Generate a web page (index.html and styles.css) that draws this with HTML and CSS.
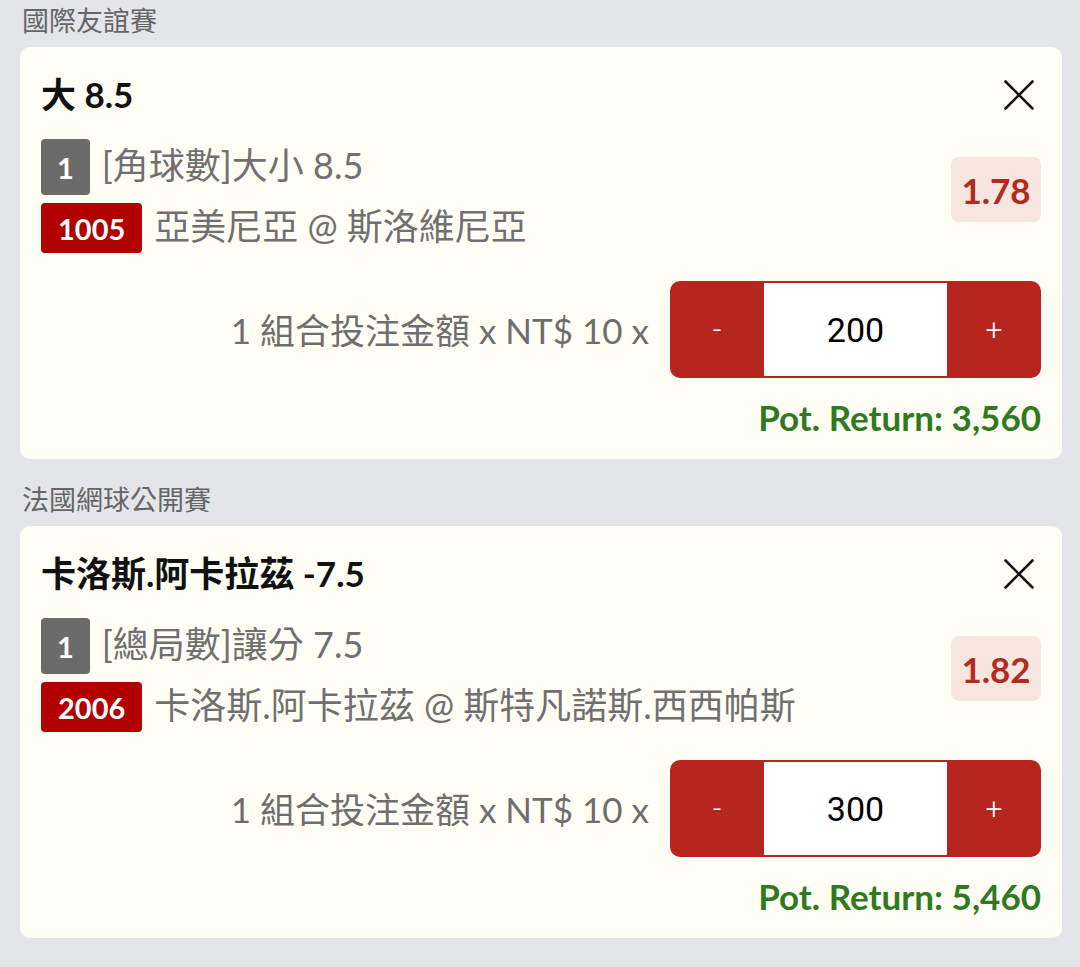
FILE: index.html
```html
<!DOCTYPE html>
<html lang="zh-Hant">
<head>
<meta charset="utf-8">
<title>Bet slip</title>
<link rel="stylesheet" href="styles.css">
</head>
<body>
<div class="slip">
  <section class="group">
    <div class="group-title">國際友誼賽</div>
    <div class="card">
      <div class="card-head">
        <div class="pick">大 8.5</div>
        <button class="close" aria-label="close">
          <svg viewBox="0 0 30 30" width="30" height="30"><path d="M1.5 1.5 L28.5 28.5 M28.5 1.5 L1.5 28.5" stroke="#111" stroke-width="2.6" stroke-linecap="round" fill="none"/></svg>
        </button>
      </div>
      <div class="sel">
        <div class="sel-info">
          <div class="sel-row row-a"><span class="badge badge-gray">1</span><span class="sel-text">[角球數]大小 8.5</span></div>
          <div class="sel-row row-b"><span class="badge badge-red">1005</span><span class="sel-text">亞美尼亞 @ 斯洛維尼亞</span></div>
        </div>
        <div class="odds">1.78</div>
      </div>
      <div class="stake">
        <span class="stake-label">1 組合投注金額 x NT$ 10 x</span>
        <div class="stepper">
          <button class="step">-</button>
          <input class="amount" type="text" value="200">
          <button class="step">+</button>
        </div>
      </div>
      <div class="pot">Pot. Return: 3,560</div>
    </div>
  </section>
  <section class="group">
    <div class="group-title">法國網球公開賽</div>
    <div class="card">
      <div class="card-head">
        <div class="pick">卡洛斯.阿卡拉茲 -7.5</div>
        <button class="close" aria-label="close">
          <svg viewBox="0 0 30 30" width="30" height="30"><path d="M1.5 1.5 L28.5 28.5 M28.5 1.5 L1.5 28.5" stroke="#111" stroke-width="2.6" stroke-linecap="round" fill="none"/></svg>
        </button>
      </div>
      <div class="sel">
        <div class="sel-info">
          <div class="sel-row row-a"><span class="badge badge-gray">1</span><span class="sel-text">[總局數]讓分 7.5</span></div>
          <div class="sel-row row-b"><span class="badge badge-red">2006</span><span class="sel-text">卡洛斯.阿卡拉茲 @ 斯特凡諾斯.西西帕斯</span></div>
        </div>
        <div class="odds">1.82</div>
      </div>
      <div class="stake">
        <span class="stake-label">1 組合投注金額 x NT$ 10 x</span>
        <div class="stepper">
          <button class="step">-</button>
          <input class="amount" type="text" value="300">
          <button class="step">+</button>
        </div>
      </div>
      <div class="pot">Pot. Return: 5,460</div>
    </div>
  </section>
</div>
</body>
</html>
```
FILE: styles.css
```css
* { box-sizing: border-box; }
html, body { margin: 0; padding: 0; }
body {
  background: #e4e5e9;
  font-family: "Lato", "Noto Sans CJK TC", sans-serif;
  width: 1080px;
  height: 967px;
  overflow: hidden;
}
.slip {
  padding: 1px 18px 0 20px;
  display: flex;
  flex-direction: column;
  gap: 21px;
}
.group-title {
  height: 38px;
  line-height: 38px;
  font-size: 27px;
  color: #666;
  padding-left: 2px;
  margin-bottom: 8px;
  font-family: "Noto Sans CJK TC", sans-serif;
}
.card {
  background: #fffef5;
  border-radius: 10px;
  height: 412px;
  padding: 26px 21px 0 21px;
}
.card-head {
  display: flex;
  align-items: center;
  justify-content: space-between;
  height: 44px;
}
.pick {
  font-size: 35px;
  font-weight: 700;
  color: #111;
  margin-bottom: 6px;
}
.close {
  background: none;
  border: 0;
  padding: 0;
  width: 30px;
  height: 30px;
  margin-right: 7px;
  display: flex;
}
.sel {
  margin-top: 22px;
  display: flex;
  align-items: flex-start;
}
.sel-info {
  flex: 1;
  display: flex;
  flex-direction: column;
  gap: 8px;
}
.sel-row {
  display: flex;
  align-items: center;
  gap: 12px;
}
.row-a .badge { height: 56px; }
.row-b .badge { height: 50px; }
.badge {
  display: inline-flex;
  align-items: center;
  justify-content: center;
  padding: 0 16px;
  border-radius: 4px;
  color: #fff;
  font-size: 29px;
  font-weight: 700;
}
.badge-red { padding: 0 17px; }
.badge-gray { background: #6b6b6b; }
.badge-red { background: #b20000; }
.sel-text {
  font-size: 36px;
  line-height: 36px;
  color: #707070;
  padding-bottom: 4px;
}
.odds {
  margin-top: 18px;
  width: 90px;
  height: 65px;
  border-radius: 8px;
  background: #f6e6df;
  color: #b22a22;
  font-size: 35px;
  font-weight: 700;
  display: flex;
  align-items: center;
  justify-content: center;
}
.stake {
  margin-top: 28px;
  display: flex;
  justify-content: flex-end;
  align-items: center;
  gap: 21px;
}
.stake-label {
  font-size: 35px;
  color: #6e6e6e;
  margin-bottom: 3px;
}
.stepper {
  width: 371px;
  height: 97px;
  background: #b7261e;
  border-radius: 10px;
  display: flex;
  align-items: stretch;
  padding: 2px 0;
}
.step {
  width: 94px;
  background: none;
  border: 0;
  color: #fff;
  font-family: "Roboto", sans-serif;
  font-weight: 300;
  font-size: 30px;
  padding: 0;
}
.amount {
  width: 183px;
  border: 0;
  outline: none;
  background: #fff;
  text-align: center;
  font-family: "Roboto", sans-serif;
  font-size: 34px;
  color: #000;
  padding: 0;
}
.pot {
  margin-top: 19px;
  text-align: right;
  font-size: 35px;
  font-weight: 700;
  color: #2f7a20;
  line-height: 40px;
}
```
